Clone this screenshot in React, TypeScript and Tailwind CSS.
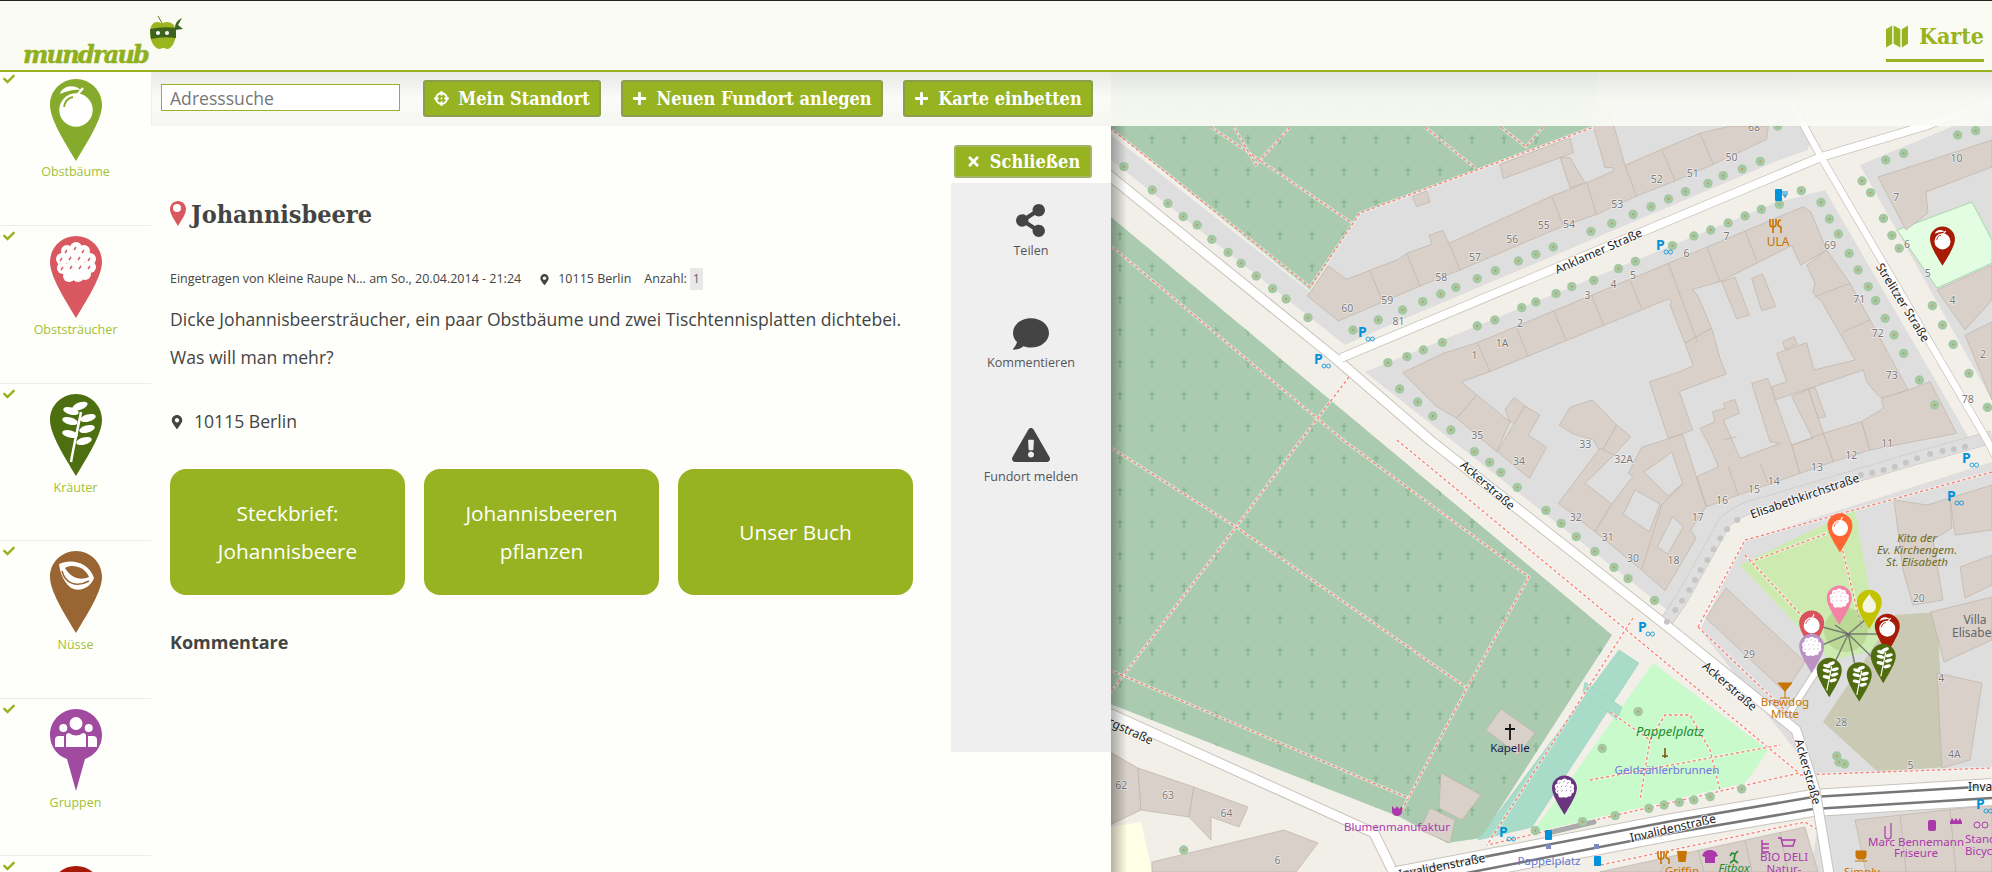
import { FaCheck, FaComment, FaCrosshairs, FaExclamationTriangle, FaMapMarkerAlt, FaPlus, FaShareAlt, FaTimes } from 'react-icons/fa';

type Pt = [number, number];
type PinIcon = 'apple' | 'ball' | 'berries' | 'herb' | 'nut' | 'group' | 'pear';

const z5 = ([x, y]: Pt): Pt => [1110 + x * 0.5625, y / 3];
const z6 = ([x, y]: Pt): Pt => [1110 + x * 0.5625, 440 + y / 3];
const c1 = (list: Pt[]): Pt[] => list.map(([x, y]) => [1390 + x / 3, 200 + y / 3]);
const c2 = (list: Pt[]): Pt[] => list.map(([x, y]) => [1300 + x / 3, 126 + y / 3]);
const pts = (list: Pt[]) => list.map((p) => p.join(',')).join(' ');

function PinGlyph({ icon, color }: { icon: PinIcon; color: string }) {
  if (icon === 'apple' || icon === 'ball') {
    return (
      <g>
        <circle cx="26" cy="31" r="16.7" fill="#fff" />
        {icon === 'apple' && <path d="M10 15C12 8 22 4 31 11C24 10 17 12 10 15Z" fill="#fff" />}
        {icon === 'apple' && <path d="M28 15L33 9" stroke="#fff" strokeWidth="2.5" />}
        {icon === 'ball' && <path d="M28 14L31 8" stroke="#fff" strokeWidth="2.5" />}
        <path d="M23 18C18 19 15 22 14 28" stroke={color} strokeWidth="1.8" fill="none" />
      </g>
    );
  }
  if (icon === 'pear') {
    return <path d="M26 9C30 17 40 24 40 35C40 44 34 48 26 48C18 48 12 44 12 35C12 24 22 17 26 9Z" fill="#f5f5e4" />;
  }
  if (icon === 'berries') {
    const dots: Pt[] = [[17, 15], [26, 12], [34, 15], [12, 23], [21, 22], [30, 22], [40, 23], [13, 32], [22, 31], [31, 31], [40, 31], [19, 40], [28, 40], [35, 38]];
    return (
      <g>
        {dots.map(([x, y]) => (
          <circle key={`${x}-${y}`} cx={x} cy={y} r="6" fill="#fff" />
        ))}
        {dots.slice(0, 11).map(([x, y]) => (
          <path key={`m${x}-${y}`} d={`M${x - 2} ${y + 2}l2-3`} stroke={color} strokeWidth="1.4" />
        ))}
      </g>
    );
  }
  if (icon === 'herb') {
    const leaves: [number, number, number][] = [[30, 12, -20], [21, 17, 15], [38, 24, -15], [20, 27, 15], [37, 35, -15], [20, 40, 12], [34, 47, -15]];
    return (
      <g>
        <path d="M21 68C24 50 28 34 31 18" stroke="#fff" strokeWidth="2.5" fill="none" />
        {leaves.map(([x, y, r]) => (
          <ellipse key={`${x}-${y}`} cx={x} cy={y} rx="8" ry="3.6" fill="#fff" transform={`rotate(${r} ${x} ${y})`} />
        ))}
      </g>
    );
  }
  if (icon === 'nut') {
    return (
      <g>
        <path d="M9 13C20 8 38 10 44 27C40 38 27 42 20 36C14 31 10 22 9 13Z" fill="#fff" />
        <path d="M15 17C22 13 34 15 39 26C30 30 21 27 15 17Z" fill={color} />
        <path d="M12 20C15 32 26 37 39 30" stroke={color} strokeWidth="1.5" fill="none" />
      </g>
    );
  }
  return (
    <g fill="#fff">
      <circle cx="26" cy="14.5" r="6.5" />
      <circle cx="13.3" cy="19" r="4" />
      <circle cx="38.7" cy="19" r="4" />
      <path d="M16 38V27Q16 24 19 24Q26 29 33 24Q36 24 36 27V38Z" />
      <path d="M5 38V31Q5 27 9 27H14V38Z" />
      <path d="M38 38V27H43Q47 27 47 31V38Z" />
    </g>
  );
}

function Pin({ color, icon }: { color: string; icon: PinIcon }) {
  const shape =
    icon === 'group'
      ? 'M26 0C11.6 0 0 11.6 0 26C0 38 8 47 17 50L26 82L35 50C44 47 52 38 52 26C52 11.6 40.4 0 26 0Z'
      : 'M26 0C11.6 0 0 11.6 0 26C0 40 14 62 26 82C38 62 52 40 52 26C52 11.6 40.4 0 26 0Z';
  return (
    <g>
      <path d={shape} fill={color} />
      <PinGlyph icon={icon} color={color} />
    </g>
  );
}

// tip x, tip y in page coordinates
const mapPins: { x: number; y: number; color: string; icon: PinIcon }[] = [
  { x: 1942.5, y: 266, color: '#a81c07', icon: 'apple' },
  { x: 1840, y: 552.7, color: '#ff6633', icon: 'ball' },
  { x: 1564.5, y: 815, color: '#6b3480', icon: 'berries' },
  { x: 1811.7, y: 650, color: '#d9525e', icon: 'ball' },
  { x: 1839.3, y: 625, color: '#f283a5', icon: 'berries' },
  { x: 1869.3, y: 629.3, color: '#c4c300', icon: 'pear' },
  { x: 1887.3, y: 653.3, color: '#a81c07', icon: 'apple' },
  { x: 1811.7, y: 673.3, color: '#bc92c5', icon: 'berries' },
  { x: 1883.3, y: 683.3, color: '#4f6d10', icon: 'herb' },
  { x: 1859.3, y: 701.7, color: '#4f6d10', icon: 'herb' },
  { x: 1829.3, y: 697.3, color: '#4f6d10', icon: 'herb' },
];

const buildings: Pt[][] = [
  // north of Anklamer Straße
  ...[
    c2([[22, 510], [85, 420], [140, 460], [295, 400], [320, 382], [395, 355], [388, 328], [428, 313], [447, 352], [755, 210], [860, 170], [940, 135], [940, 125], [915, 125], [880, 0], [860, -60], [925, -60], [975, 118], [1085, 70], [1200, 22], [1290, 0], [1405, 0], [1400, 40], [1240, 115], [1125, 165], [1010, 210], [890, 265], [790, 300], [480, 432], [360, 480], [115, 585]]),
    c2([[600, 115], [810, 35], [820, 80], [780, 95], [810, 95], [855, 170], [810, 185], [780, 95], [610, 158]]),
    c2([[337, 210], [380, 195], [390, 228], [350, 242]]),
  ],
  // block between Ackerstraße, Anklamer Straße and Elisabethkirchstraße
  ...[
    [[38, 518], [160, 460], [262, 428], [835, 190], [1240, 20], [1262, 35], [1310, 150], [1232, 195], [1205, 137], [990, 245], [908, 268], [925, 290], [965, 385], [885, 430], [840, 315], [845, 305], [835, 297], [300, 515], [215, 545], [260, 585], [200, 655], [140, 620]],
    [[1250, 195], [1310, 150], [1380, 250], [1500, 470], [1555, 570], [1475, 595], [1450, 570], [1430, 545], [1420, 510], [1155, 600], [1145, 560], [1190, 545], [1160, 460], [1250, 428], [1272, 510], [1395, 480], [1295, 305], [1268, 278], [1275, 250]],
    [[1178, 425], [1212, 410], [1222, 432], [1185, 448]],
    [[995, 245], [1035, 232], [1078, 345], [1040, 357]],
    [[1085, 235], [1118, 222], [1157, 320], [1115, 332]],
    [[885, 430], [965, 385], [990, 475], [1008, 522], [868, 575], [908, 690], [835, 715], [778, 545], [870, 515], [910, 497]],
    [[930, 685], [975, 665], [968, 635], [1005, 625], [1000, 610], [1035, 598], [1048, 640], [1000, 660], [1050, 775], [1170, 730], [1140, 725], [1110, 630], [1085, 550], [1133, 535], [1205, 735], [1230, 820], [1045, 885], [950, 920], [920, 830], [985, 800], [960, 740]],
    [[1205, 590], [1255, 567], [1330, 785], [1230, 820], [1205, 735], [1268, 715]],
    [[1255, 567], [1275, 562], [1307, 650], [1285, 655]],
    [[1300, 700], [1415, 665], [1440, 750], [1330, 785]],
    [[1415, 665], [1480, 625], [1475, 595], [1555, 570], [1620, 545], [1700, 700], [1440, 750]],
    [[755, 742], [878, 703], [948, 920], [902, 990], [918, 1015], [825, 1172], [755, 1110], [615, 995], [665, 912], [728, 830], [715, 820]],
    [[508, 675], [540, 622], [607, 600], [680, 675], [633, 760], [610, 720], [545, 700]],
    [[680, 675], [722, 710], [672, 765], [633, 760]],
    [[630, 745], [672, 765], [585, 850], [665, 912], [615, 995], [505, 910]],
    [[200, 655], [260, 585], [360, 665], [320, 755]],
    [[345, 628], [372, 593], [405, 618], [375, 670], [360, 665]],
    [[405, 618], [450, 645], [415, 705], [470, 742], [418, 835], [322, 755]],
  ].map((b) => c1(b as Pt[])),
  // east of Strelitzer Straße
  [[1878, 177], [1931, 160], [1992, 140], [1992, 167], [1926, 192], [1928, 213], [1906, 230]],
  [[1937, 290], [1992, 265], [1992, 300], [1965, 330]],
  [[1965, 335], [1992, 322], [1992, 400]],
  // south of Elisabethkirchstraße
  [[1726, 588], [1805, 662], [1785, 692], [1706, 618]],
  [[1894, 500], [1927, 505], [1950, 498], [1952, 528], [1933, 540], [1943, 600], [1913, 605], [1903, 570]],
  [[1950, 498], [1992, 485], [1992, 530], [1955, 535]],
  [[1960, 567], [1992, 555], [1992, 585], [1965, 598]],
  [[1931, 612], [1992, 597], [1992, 640], [1944, 662]],
  [[1937, 673], [1982, 683], [1970, 760], [1942, 768]],
  // Bergstraße side
  [[1110, 752], [1138, 768], [1141, 810], [1110, 825]],
  [[1138, 768], [1194, 787], [1189, 817], [1141, 810]],
  [[1194, 787], [1248, 807], [1239, 827], [1211, 817], [1211, 840], [1189, 817]],
  [[1152, 862], [1284, 830], [1318, 843], [1296, 872], [1152, 872]],
  // Invalidenstraße south
  [[1855, 820], [1992, 805], [1992, 872], [1866, 872]],
  [[1600, 872], [1805, 827], [1818, 872]],
  // cemetery
  [[1501, 709], [1535, 733], [1518, 755], [1486, 730]],
  [[1441, 773], [1481, 795], [1462, 820], [1439, 808]],
  [[1430, 808], [1455, 820], [1450, 843], [1420, 830]],
];

const courtyards: Pt[][] = [
  [[762, 815], [828, 770], [845, 755], [878, 850], [835, 888]],
  [[735, 870], [810, 912], [778, 995], [700, 942]],
  [[848, 950], [880, 980], [833, 1062], [802, 1040]],
].map((b) => c1(b as Pt[]));

const partyWalls: Pt[][] = [
  ...[
    [[262, 428], [300, 515]], [[380, 385], [415, 470]], [[490, 330], [527, 420]], [[605, 285], [640, 375]], [[720, 240], [755, 325]], [[835, 190], [922, 425]], [[950, 140], [990, 245]], [[1065, 93], [1100, 180]], [[1380, 250], [1275, 290]], [[1440, 360], [1360, 395]], [[1000, 720], [1040, 710]], [[1015, 800], [1045, 885]], [[1110, 790], [1135, 850]], [[880, 850], [815, 915]], [[815, 915], [755, 1110]], [[1205, 735], [1300, 700]],
  ].map((l) => c1(l as Pt[])),
  ...[
    [[210, 435], [245, 520]], [[320, 382], [360, 480]], [[447, 352], [480, 432]], [[755, 210], [790, 300]], [[860, 170], [890, 265]], [[975, 118], [1010, 210]], [[1085, 70], [1125, 165]], [[1200, 22], [1240, 115]],
  ].map((l) => c2(l as Pt[])),
  [[1666, 864], [1660, 872]],
  [[1698, 850], [1704, 872]],
  [[1745, 840], [1752, 872]],
  [[1780, 832], [1788, 872]],
  [[1900, 815], [1906, 872]],
  [[1950, 810], [1956, 872]],
];

const treesA: Pt[] = ([[25, 500], [75, 570], [103, 610], [130, 650], [155, 675], [181, 718], [210, 757], [233, 790], [260, 828], [289, 866], [313, 897], [352, 953], [432, 990], [477, 960], [520, 930], [556, 905], [588, 882], [615, 862], [653, 836], [685, 812], [726, 783], [757, 763], [788, 741], [855, 694], [892, 670], [930, 643], [962, 620], [993, 597], [1023, 575], [1063, 550], [1090, 527], [1124, 507], [1156, 484], [494, 1088], [528, 1070], [557, 1050], [591, 1027], [653, 978], [684, 960], [732, 923], [757, 906], [793, 881], [821, 860], [860, 841], [904, 806], [934, 784], [1000, 737], [1038, 708], [1068, 690], [1099, 669], [1129, 648], [1158, 628], [1190, 613], [1229, 572], [1264, 607], [1279, 657], [1295, 702], [1314, 760], [1330, 810], [1348, 860], [1361, 902], [1378, 955], [1394, 1005], [1411, 1060], [1439, 1140], [1466, 1215], [1337, 543], [1352, 578], [1375, 655], [1390, 706], [1403, 745], [1462, 917], [1480, 975], [1499, 1033], [1527, 1120], [1560, 1222], [1379, 480], [1411, 460], [1507, 405], [1539, 392], [1187, 378], [515, 1167], [547, 1206], [574, 1248], [606, 1290]] as Pt[]).map(z5);
const treesB: Pt[] = ([[648, 35], [675, 67], [695, 97], [724, 142], [775, 211], [802, 250], [829, 290], [862, 335], [896, 382], [921, 416], [968, 481], [939, 815], [875, 925], [1123, 1047], [1067, 1070], [1038, 1080], [1012, 1087], [985, 1095], [958, 1105], [898, 1127], [840, 1145], [756, 1172], [131, 1230], [1292, 948], [1296, 966], [1306, 972]] as Pt[]).map(z6);
const greyDots: Pt[] = ([[990, 545], [1005, 510], [1017, 482], [1030, 450], [1040, 420], [1050, 390], [1062, 360], [1073, 328], [1085, 295], [1097, 268], [1115, 240], [1335, 105], [1355, 98], [1375, 90], [1395, 80], [1415, 68], [1435, 55], [1458, 42], [1480, 33], [1500, 28], [1520, 20]] as Pt[]).map(z6);

const housesA: [string, number, number][] = [['68', 1145, 385], ['50', 1105, 475], ['51', 1036, 522], ['52', 972, 540], ['53', 902, 615], ['54', 816, 677], ['55', 771, 680], ['56', 715, 720], ['57', 649, 775], ['58', 589, 835], ['59', 493, 903], ['60', 422, 927], ['81', 513, 967], ['1A', 697, 1032], ['1', 648, 1068], ['2', 729, 972], ['3', 849, 888], ['4', 895, 855], ['5', 930, 830], ['6', 1025, 763], ['7', 1096, 712], ['69', 1280, 740], ['71', 1332, 902], ['72', 1365, 1004], ['73', 1390, 1130], ['78', 1525, 1200], ['7', 1398, 594], ['6', 1417, 737], ['5', 1454, 822], ['4', 1498, 903], ['2', 1552, 1065], ['10', 1505, 478], ['35', 653, 1308]];
const housesB: [string, number, number][] = [['33', 845, 15], ['34', 727, 67], ['32A', 913, 60], ['32', 828, 235], ['31', 885, 295], ['30', 930, 357], ['18', 1002, 363], ['17', 1045, 235], ['16', 1088, 185], ['15', 1145, 150], ['14', 1180, 128], ['13', 1257, 85], ['12', 1318, 48], ['11', 1382, 12], ['29', 1136, 645], ['20', 1438, 478], ['28', 1300, 850], ['4', 1478, 718], ['4A', 1501, 947], ['5', 1423, 978], ['62', 20, 1040], ['63', 103, 1068], ['64', 207, 1123], ['6', 298, 1263]];

const bikeParking: Pt[] = [[1358, 337], [1314, 364], [1656, 250], [1638, 632], [1962, 463], [1947, 501], [1499, 837], [1976, 809]];

const footpaths: Pt[][] = [
  [[1110, 245], [1343, 440], [1529, 577], [1467, 688], [1402, 810]],
  [[1349, 377], [1301, 440], [1236, 527], [1110, 693]],
  [[1110, 447], [1236, 527], [1467, 688]],
  [[1110, 670], [1408, 798]],
  [[1110, 128], [1310, 287], [1360, 213], [1594, 127]],
  [[1211, 127], [1352, 223]],
  [[1290, 127], [1256, 165], [1234, 127]],
  [[1425, 127], [1475, 168]],
  [[1501, 127], [1526, 147], [1543, 127]],
  [[1397, 440], [1799, 773], [1487, 845]],
  [[1633, 618], [1487, 845]],
  [[1590, 780], [1780, 745]],
  [[1610, 712], [1650, 740], [1640, 800]],
  [[1650, 740], [1665, 715], [1690, 715], [1710, 750], [1720, 790]],
  [[1698, 627], [1745, 540], [1992, 472]],
  [[1698, 627], [1790, 715]],
  [[1800, 775], [1992, 768]],
  [[1750, 562], [1828, 533]],
  [[1840, 540], [1862, 630]],
  [[1745, 555], [1815, 630]],
  [[1601, 865], [1805, 822], [1818, 830]],
  [[1855, 812], [1992, 803]],
];

function MapDrawing() {
  return (
    <svg viewBox="1111 72 881 800" width="881" height="800" className="block font-['Noto_Sans']">
      <defs>
        <pattern id="graves" x="1136" y="124" width="32" height="32" patternUnits="userSpaceOnUse">
          <path d="M16 11V20M13 14H19" stroke="#8cb893" strokeWidth="1.7" />
        </pattern>
      </defs>
      <rect x="1111" y="72" width="881" height="800" fill="#f2efe9" />

      {/* landuse */}
      <polygon points="1111,135 1310,292 1360,213 1594,126 1600,72 1790,72 1812,135 1808,150 1782,159 1378,330 1345,345 1111,160" fill="#dfdede" />
      <polygon points="1365,372 1775,203 1825,190 1970,440 1745,505 1670,612" fill="#dfdede" />
      <polygon points="1860,165 1992,110 1992,400" fill="#dfdede" />
      <polygon points="1745,540 1992,462 1992,768 1815,775 1700,630" fill="#dfdede" />
      <polygon points="1810,872 1820,815 1992,795 1992,872" fill="#dfdede" />
      <polygon points="1897,230 1972,202 1992,240 1992,263 1937,288" fill="#e2fde2" stroke="#a8d8a8" />
      <polygon points="1740,565 1855,510 1880,650 1830,660" fill="#cdebb0" />
      <polygon points="1895,615 1937,612 1945,767 1878,772 1823,722" fill="#c9c9b4" />
      <polygon points="1110,827 1141,822 1152,872 1110,872" fill="#ffffe5" />

      {/* cemetery */}
      <polygon points="1100,50 1600,50 1594,126 1360,213 1310,290 1100,120" fill="#aacbaf" />
      <polygon points="1100,50 1600,50 1594,126 1360,213 1310,290 1100,120" fill="url(#graves)" />
      <polygon points="1105,212 1612,635 1481,838 1447,843 1400,817 1105,702" fill="#aacbaf" />
      <polygon points="1105,212 1612,635 1481,838 1447,843 1400,817 1105,702" fill="url(#graves)" />

      {/* Pappelplatz */}
      <polygon points="1653,663 1768,750 1757,767 1745,783 1532,833 1622,707" fill="#c8facc" />
      <polygon points="1619,650 1639,663 1532,827 1478,840" fill="#a8dcc9" stroke="#94cdb8" strokeWidth="0.5" />
      <polygon points="1585,682 1622,707 1617,720 1583,692" fill="#a8dcc9" stroke="#94cdb8" strokeWidth="0.5" />

      {buildings.map((b, i) => (
        <polygon key={i} points={pts(b)} fill="#d9d0c9" stroke="#bfb3a8" strokeWidth="0.7" />
      ))}
      {courtyards.map((b, i) => (
        <polygon key={i} points={pts(b)} fill="#dfdede" stroke="#bfb3a8" strokeWidth="0.7" />
      ))}
      {partyWalls.map((l, i) => (
        <polyline key={i} points={pts(l)} fill="none" stroke="#bfb3a8" strokeWidth="0.7" />
      ))}

      {/* paths */}
      {footpaths.map((p, i) => (
        <g key={i} fill="none">
          <polyline points={pts(p)} stroke="#fff" strokeOpacity="0.45" strokeWidth="3" />
          <polyline points={pts(p)} stroke="#fa8072" strokeWidth="1.3" strokeDasharray="3 2.5" />
        </g>
      ))}

      {/* roads */}
      <g fill="none" strokeLinejoin="round">
        <path d="M1664 625L1683 597L1723 525Q1730 515 1748 508L1910 460L1992 437" stroke="#c9c4bb" strokeWidth="13" />
        <path d="M1664 625L1683 597L1723 525Q1730 515 1748 508L1910 460L1992 437" stroke="#dfdede" strokeWidth="12" />
        <path d="M1790 712L1817 670" stroke="#c8c4bc" strokeWidth="8" />
        <path d="M1790 712L1817 670" stroke="#fff" strokeWidth="6" />
        <path d="M1100 709L1374 833L1397 880" stroke="#c8c4bc" strokeWidth="11" />
        <path d="M1100 709L1374 833L1397 880" stroke="#fff" strokeWidth="9" />
        <path d="M1397 880L1672 827L1813 803L1992 792" stroke="#c8c4bc" strokeWidth="28" />
        <path d="M1397 880L1672 827L1813 803L1992 792" stroke="#fff" strokeWidth="26" />
        <path d="M1405 872L1672 821L1813 797L1992 786" stroke="#777" strokeWidth="2.5" />
        <path d="M1405 885L1672 833L1813 809L1992 798" stroke="#777" strokeWidth="2.5" />
        <path d="M1100 168L1335 358L1430 440L1672 630L1796 730L1815 790L1830 880" stroke="#c8c4bc" strokeWidth="11" />
        <path d="M1100 168L1335 358L1430 440L1672 630L1796 730L1815 790L1830 880" stroke="#fff" strokeWidth="9" />
        <path d="M1341 358L1821 157L1925 126L1992 100" stroke="#c8c4bc" strokeWidth="9.5" />
        <path d="M1790 100L1821 157L1987 440L2000 465" stroke="#c8c4bc" strokeWidth="8" />
        <path d="M1341 358L1821 157L1925 126L1992 100" stroke="#fff" strokeWidth="8" />
        <path d="M1790 100L1821 157L1987 440L2000 465" stroke="#fff" strokeWidth="6.5" />
        <path d="M1552 832L1594 822" stroke="#aaa" strokeWidth="5" strokeLinecap="round" />
      </g>

      {/* spider legs */}
      <circle cx="1846" cy="630" r="22" fill="#a8c87a" fillOpacity="0.5" />
      {[[1815, 625], [1835, 625], [1865, 620], [1880, 634], [1815, 648], [1835, 662], [1855, 665], [1875, 660]].map(([x, y]) => (
        <line key={`${x}-${y}`} x1="1848.3" y1="634" x2={x} y2={y} stroke="#666" strokeOpacity="0.8" strokeWidth="1.5" />
      ))}

      {[...treesA, ...treesB].map(([x, y], i) => (
        <g key={i}>
          <circle cx={x} cy={y} r="4.7" fill="#a4c9a2" />
          <circle cx={x} cy={y} r="0.9" fill="#c58a50" />
        </g>
      ))}
      {greyDots.map(([x, y], i) => (
        <circle key={i} cx={x} cy={y} r="3" fill="#c6c6c6" />
      ))}

      {/* house numbers */}
      <g fill="#7a7a7a" fontSize="10.500" textAnchor="middle" dominantBaseline="middle" stroke="#fff" strokeOpacity="0.6" strokeWidth="1.5" paintOrder="stroke">
        {housesA.map(([t, x, y]) => (
          <text key={`a${t}${x}`} x={z5([x, y])[0]} y={z5([x, y])[1]}>{t}</text>
        ))}
        {housesB.map(([t, x, y]) => (
          <text key={`b${t}${x}`} x={z6([x, y])[0]} y={z6([x, y])[1]}>{t}</text>
        ))}
      </g>

      {/* bike parking */}
      {bikeParking.map(([x, y]) => (
        <g key={`${x}-${y}`}>
          <text x={x} y={y} fontSize="14" fontWeight="700" fill="#0092da">P</text>
          <circle cx={x + 10} cy={y + 2} r="2" fill="none" stroke="#0092da" strokeWidth="0.8" />
          <circle cx={x + 14.500} cy={y + 2} r="2" fill="none" stroke="#0092da" strokeWidth="0.8" />
        </g>
      ))}

      {/* street names */}
      <g fill="#222" fontSize="12" textAnchor="middle" stroke="#fff" strokeOpacity="0.8" strokeWidth="2" paintOrder="stroke" dominantBaseline="middle">
        <text x="1599" y="252" transform="rotate(-24 1599 252)">Anklamer Straße</text>
        <text x="1902" y="303" transform="rotate(58 1902 303)">Strelitzer Straße</text>
        <text x="1487" y="486" transform="rotate(41 1487 486)">Ackerstraße</text>
        <text x="1729" y="687" transform="rotate(41 1729 687)">Ackerstraße</text>
        <text x="1807" y="772" transform="rotate(74 1807 772)">Ackerstraße</text>
        <text x="1805" y="497" transform="rotate(-19 1805 497)">Elisabethkirchstraße</text>
        <text x="1673" y="829" transform="rotate(-13 1673 829)">Invalidenstraße</text>
        <text x="1442" y="867" transform="rotate(-11 1442 867)">Invalidenstraße</text>
        <text x="1968" y="788" textAnchor="start">Invalidenstraße</text>
        <text x="1152" y="742" transform="rotate(25 1152 742)" textAnchor="end">Bergstraße</text>
      </g>

      {/* labels */}
      <g textAnchor="middle" fontSize="12">
        <text x="1510" y="752" fill="#1c1c4f" fontSize="11.500">Kapelle</text>
        <text x="1670" y="736" fill="#238b2e" fontSize="13" fontStyle="italic">Pappelplatz</text>
        <text x="1667" y="774" fill="#7474e0" fontSize="11.500">Geldzählerbrunnen</text>
        <text x="1397" y="831" fill="#ac39ac" fontSize="11.500">Blumenmanufaktur</text>
        <text x="1778" y="246" fill="#c77400" fontSize="12">ULA</text>
        <text x="1785" y="706" fill="#c77400" fontSize="11.500">Brewdog</text>
        <text x="1785" y="718" fill="#c77400" fontSize="11.500">Mitte</text>
        <text x="1917" y="542" fill="#6b6b1e" fontSize="11.500" fontStyle="italic">Kita der</text>
        <text x="1917" y="554" fill="#6b6b1e" fontSize="11.500" fontStyle="italic">Ev. Kirchengem.</text>
        <text x="1917" y="566" fill="#6b6b1e" fontSize="11.500" fontStyle="italic">St. Elisabeth</text>
        <text x="1975" y="624" fill="#666" fontSize="12">Villa</text>
        <text x="1952" y="637" fill="#666" fontSize="12" textAnchor="start">Elisabeth</text>
        <text x="1916" y="846" fill="#ac39ac" fontSize="11.500">Marc Bennemann</text>
        <text x="1916" y="857" fill="#ac39ac" fontSize="11.500">Friseure</text>
        <text x="1965" y="843" fill="#ac39ac" fontSize="11.500" textAnchor="start">Stand</text>
        <text x="1965" y="855" fill="#ac39ac" fontSize="11.500" textAnchor="start">Bicycle</text>
        <text x="1784" y="861" fill="#ac39ac" fontSize="11.500">BIO DELI</text>
        <text x="1784" y="873" fill="#ac39ac" fontSize="11.500">Natur-</text>
        <text x="1682" y="875" fill="#c77400" fontSize="11.500">Griffin</text>
        <text x="1734" y="872" fill="#238b2e" fontSize="11.500" fontStyle="italic">Fitbox</text>
        <text x="1549" y="865" fill="#6b78d0" fontSize="11.500">Pappelplatz</text>
        <text x="1862" y="876" fill="#c77400" fontSize="11.500">Simply</text>
      </g>

      {/* poi symbols */}
      <path d="M1773 219v14M1770 219v5q0 3 3 3t3-3v-5M1781 220c-4 0-4 7 0 7v6" stroke="#c77400" strokeWidth="1.6" fill="none" />
      <rect x="1775" y="189" width="7" height="12" rx="1" fill="#0092da" />
      <path d="M1785 191v7M1783 191v3q0 2 2 2t2-2v-3" stroke="#0092da" fill="none" />
      <path d="M1778 683h14l-7 8zM1785 691v7M1780 698h10" fill="#c77400" stroke="#c77400" />
      <path d="M1510 724v16M1505 729h10" stroke="#111" strokeWidth="1.8" />
      <path d="M1392 806l3 3 2-3 2 3 3-3v6q-1 4-5 4t-5-4zM1397 816v3" fill="#ac39ac" />
      <path d="M1665 748v10M1662 756h6" stroke="#7a5a10" strokeWidth="1.6" />
      {/* shops along Invalidenstraße */}
      <rect x="1545" y="830" width="7" height="10" rx="1" fill="#0092da" />
      <rect x="1594" y="856" width="7" height="10" rx="1" fill="#0092da" />
      <rect x="1546" y="844" width="5" height="5" fill="#7b8bc0" />
      <rect x="1594" y="844" width="5" height="5" fill="#7b8bc0" />
      <path d="M1661 851v13M1658 851v5q0 3 3 3t3-3v-5M1669 852c-4 0-4 7 0 7v5" stroke="#c77400" strokeWidth="1.6" fill="none" />
      <path d="M1677 851h10l-1.500 11h-7z" fill="#c77400" />
      <path d="M1704 852l4-2h4l4 2 2 4-3 1v6h-10v-6l-3-1z" fill="#ac39ac" />
      <path d="M1738 851l-3 3-3-1-2 3M1735 854l-1 6-4 3M1734 860l4 3" stroke="#238b2e" strokeWidth="1.6" fill="none" />
      <path d="M1762 840v12h7M1762 844h7M1762 848h7" stroke="#ac39ac" strokeWidth="1.4" fill="none" />
      <path d="M1778 838h3l2 8h10l2-6h-13" stroke="#ac39ac" strokeWidth="1.4" fill="none" />
      <path d="M1885 826v10q0 3 3 3t3-3v-13" stroke="#ac39ac" strokeWidth="1.2" fill="none" />
      <rect x="1928" y="820" width="8" height="11" rx="2" fill="#ac39ac" />
      <path d="M1950 822l2-4 2 3 2-3 2 3 2-3 2 4v2h-12z" fill="#ac39ac" />
      <circle cx="1977" cy="825" r="3" fill="none" stroke="#ac39ac" />
      <circle cx="1985" cy="825" r="3" fill="none" stroke="#ac39ac" />
      <path d="M1856 851h10v5q0 3-3 3h-4q-3 0-3-3zM1855 861h12" fill="#c77400" stroke="#c77400" />

      {mapPins.map((p, i) => (
        <g key={i} transform={`translate(${p.x - 12.5} ${p.y - 39.5}) scale(0.48)`}>
          <Pin color={p.color} icon={p.icon} />
        </g>
      ))}
    </svg>
  );
}

const categories: { label: string; color: string; icon: PinIcon; box: string }[] = [
  { label: 'Obstbäume', color: '#86ab2c', icon: 'apple', box: 'h-[154px] pt-[7px]' },
  { label: 'Obststräucher', color: '#d9575f', icon: 'berries', box: 'h-[158px] pt-[10px]' },
  { label: 'Kräuter', color: '#4d6f10', icon: 'herb', box: 'h-[157px] pt-[10px]' },
  { label: 'Nüsse', color: '#986533', icon: 'nut', box: 'h-[158px] pt-[10px]' },
  { label: 'Gruppen', color: '#a04aa0', icon: 'group', box: 'h-[157px] pt-[10px]' },
  { label: '', color: '#a81a05', icon: 'apple', box: 'h-[158px] pt-[10px]' },
];

function Sidebar() {
  return (
    <aside className="w-[151px] shrink-0 overflow-hidden">
      {categories.map((c, i) => (
        <div key={c.color} className={`${c.box} relative flex flex-col items-center border-b border-[#ececea]`}>
          <FaCheck className={`${i === 0 ? 'top-[1px]' : 'top-[4px]'} absolute left-[3px] text-[12px] text-[#97b321]`} />
          <svg viewBox="0 0 52 82" width="52" height="82" className="block">
            <Pin color={c.color} icon={c.icon} />
          </svg>
          <span className={`${i === 0 ? 'mt-[2px]' : 'mt-[3px]'} text-[12.5px] leading-[18px] text-[#a3bf35]`}>{c.label}</span>
        </div>
      ))}
    </aside>
  );
}

function ToolButton({ icon, label, className }: { icon: React.ReactNode; label: string; className: string }) {
  return (
    <button className={`${className} flex items-center justify-center gap-[9px] rounded-[3px] border-2 border-[#8c9f4e] bg-[#97b321] font-['DejaVu_Serif_Condensed','DejaVu_Serif',serif] text-[18px] font-bold text-white`}>
      {icon}
      {label}
    </button>
  );
}

function LinkCard({ lines }: { lines: string[] }) {
  return (
    <div className="flex h-[126px] w-[235px] flex-col items-center justify-center rounded-[16px] bg-[#97b321] text-[20.800px] leading-[38px] text-white">
      {lines.map((l) => (
        <span key={l}>{l}</span>
      ))}
    </div>
  );
}

function ActionItem({ icon, label, className, gap }: { icon: React.ReactNode; label: string; className: string; gap: string }) {
  return (
    <div className={`${className} flex flex-col items-center text-[12.600px] leading-[18px] text-[#555]`}>
      {icon}
      <span className={gap}>{label}</span>
    </div>
  );
}

export default function App() {
  return (
    <div className="relative flex h-[872px] w-[1992px] flex-col overflow-hidden bg-[#fefffa] font-['Open_Sans',sans-serif] text-[#444]">
      <header className="flex h-[72px] shrink-0 justify-between border-t border-b-2 border-t-[#222] border-b-[#97b321] bg-[#fafcf4]">
        <div className="flex items-start pl-[23px]">
          <span className="mt-[37px] font-['DejaVu_Serif',serif] text-[24px] font-bold italic leading-[34px] tracking-[-1.800px] text-[#8fb01c] [-webkit-text-stroke:0.5px_#8fb01c]">mundraub</span>
          <svg viewBox="0 0 36 36" width="36" height="36" className="ml-[1px] mt-[14px]">
            <path d="M12 8C5 5 1 10 1 18C1 27 6 34 11 34Q13 33 14 33Q16 33 18 34C23 34 27 26 27 17C27 9 20 5 14 8Z" fill="#9ab51e" />
            <path d="M1 14Q14 11 27 13V23Q14 21 2 24Z" fill="#3f6220" />
            <circle cx="9" cy="18" r="2" fill="#fff" />
            <circle cx="18" cy="18" r="2" fill="#fff" />
            <path d="M13 8L9 1" stroke="#5b7a20" fill="none" />
            <path d="M26 15L34 14L29 10L33 3Q26 6 26 13Z" fill="#3f6220" />
          </svg>
        </div>
        <nav className="mr-[8px] flex h-[61px] w-[98px] flex-col justify-end border-b-[3px] border-[#97b321]">
          <div className="mb-[11px] flex items-center gap-[11px] font-['DejaVu_Serif_Condensed','DejaVu_Serif',serif] text-[23px] font-bold leading-[24px] text-[#97b321]">
            <svg viewBox="0 0 23 23" width="23" height="23" fill="#97b321">
              <path d="M0 4L6.500 0V19L0 23Z" />
              <path d="M8 0L15 4V23L8 19Z" />
              <path d="M16.500 4L23 0V19L16.500 23Z" />
            </svg>
            Karte
          </div>
        </nav>
      </header>

      <div className="flex flex-1">
        <Sidebar />

        <main className="flex w-[960px] shrink-0 flex-col">
          <div className="flex h-[54px] items-start gap-[20px] border-l border-[#eeeeea] bg-gradient-to-b from-[#e9eae7] via-[#fbfbf8] to-[#f5f5f2] pl-[9px] pt-[8px]">
            <input
              readOnly
              placeholder="Adresssuche"
              className="mr-[3px] mt-[4px] h-[27px] w-[239px] border border-[#97b321] bg-white px-[8px] text-[17.600px] text-[#666] placeholder:text-[#777]"
            />
            <ToolButton className="h-[37px] w-[178px]" icon={<FaCrosshairs className="text-[15px]" />} label="Mein Standort" />
            <ToolButton className="h-[37px] w-[262px]" icon={<FaPlus className="text-[15px]" />} label="Neuen Fundort anlegen" />
            <ToolButton className="h-[37px] w-[190px]" icon={<FaPlus className="text-[15px]" />} label="Karte einbetten" />
          </div>

          <div className="flex flex-1">
            <section className="w-[800px] pl-[19px] pt-[71px]">
              <h1 className="flex h-[36px] items-center gap-[5px] font-['DejaVu_Serif_Condensed','DejaVu_Serif',serif] text-[25px] font-bold">
                <svg viewBox="0 0 16 25" width="16" height="25" className="-mt-[3px]">
                  <path d="M8 0C3.6 0 0 3.6 0 8C0 13 4.500 19 8 25C11.500 19 16 13 16 8C16 3.6 12.400 0 8 0Z" fill="#d9575f" />
                  <circle cx="7" cy="7" r="4" fill="#fff" />
                </svg>
                Johannisbeere
              </h1>
              <div className="mt-[35px] flex h-[22px] items-center text-[12.500px]">
                <span>Eingetragen von Kleine Raupe N... am So., 20.04.2014 - 21:24</span>
                <FaMapMarkerAlt className="ml-[18px] text-[11px]" />
                <span className="ml-[8px]">10115 Berlin</span>
                <span className="ml-[13px]">Anzahl:</span>
                <span className="ml-[3px] flex h-[22px] w-[13px] items-center justify-center bg-[#e8e8e8] text-[#666]">1</span>
              </div>
              <p className="mt-[11px] text-[17.600px] leading-[37.500px]">
                Dicke Johannisbeersträucher, ein paar Obstbäume und zwei Tischtennisplatten dichtebei.
                <br />
                Was will man mehr?
              </p>
              <div className="mt-[27px] flex h-[37px] items-center gap-[10px] text-[17.600px]">
                <FaMapMarkerAlt className="text-[14px]" />
                10115 Berlin
              </div>
              <div className="mt-[29px] flex gap-[19px]">
                <LinkCard lines={['Steckbrief:', 'Johannisbeere']} />
                <LinkCard lines={['Johannisbeeren', 'pflanzen']} />
                <LinkCard lines={['Unser Buch']} />
              </div>
              <h2 className="mt-[34px] text-[18px] font-bold leading-[26px]">Kommentare</h2>
            </section>

            <section className="w-[160px]">
              <button className="ml-[3px] mt-[19px] flex h-[33px] w-[138px] items-center justify-center gap-[9px] rounded-[3px] border-2 border-[#a3b56a] bg-[#97b321] font-['DejaVu_Serif_Condensed','DejaVu_Serif',serif] text-[18px] font-bold text-white">
                <FaTimes className="text-[15px]" />
                Schließen
              </button>
              <div className="mt-[5px] flex h-[569px] flex-col items-center bg-[#efeff0]">
                <ActionItem className="mt-[21px]" gap="mt-[5px]" icon={<FaShareAlt className="text-[33px] text-[#444]" />} label="Teilen" />
                <ActionItem className="mt-[56px]" gap="mt-[2px]" icon={<FaComment className="text-[36px] text-[#444]" />} label="Kommentieren" />
                <ActionItem className="mt-[54px]" gap="mt-[4px]" icon={<FaExclamationTriangle className="text-[38px] text-[#444]" />} label="Fundort melden" />
              </div>
            </section>
          </div>
        </main>

        <div className="relative flex-1 overflow-hidden">
          <MapDrawing />
          <div className="absolute inset-x-0 top-0 h-[54px] bg-gradient-to-b from-[#e6e7e3]/95 via-[#f8f9f3]/94 to-[#fafbf6]/92" />
          <div className="absolute bottom-0 left-0 top-[54px] w-[16px] bg-gradient-to-r from-black/30 to-transparent" />
        </div>
      </div>
    </div>
  );
}
